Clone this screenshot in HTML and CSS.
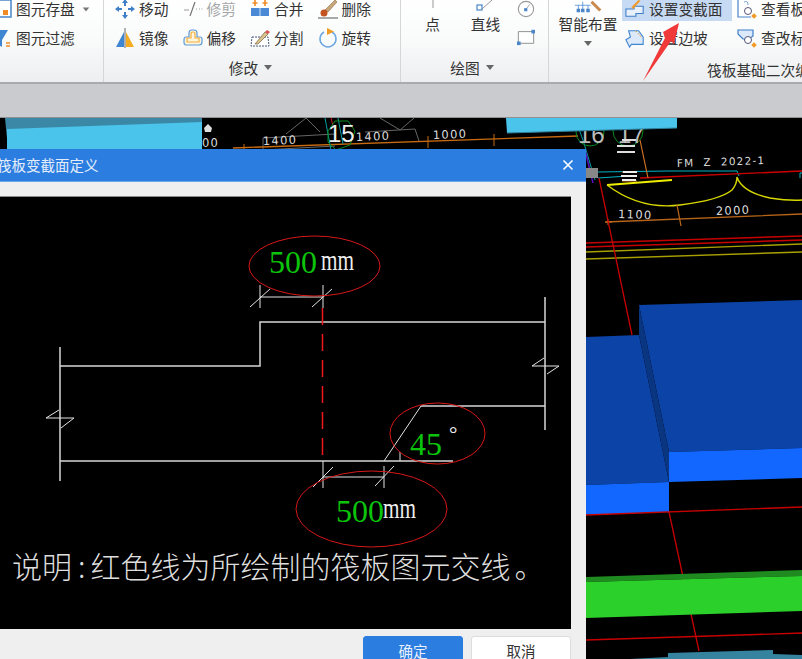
FILE: index.html
```html
<!DOCTYPE html>
<html lang="zh">
<head>
<meta charset="utf-8">
<title>筏板变截面定义</title>
<link rel="stylesheet" href="styles.css">
</head>
<body>
<div class="app">
  <header class="ribbon">
    <section class="group group-a">
      <div class="tools tools-a">
        <div class="tool"><svg class="ic ic-cut" viewBox="0 0 12 20"><rect x="-6" y="1" width="17" height="17" fill="#fff" stroke="#4a86c8" stroke-width="1.5"/><rect x="3" y="11" width="5" height="5" fill="#f08a24"/></svg><span>图元存盘</span><i class="caret caret-s"></i></div>
        <div class="tool"><svg class="ic ic-cut" viewBox="0 0 12 20"><path d="M-6 2H8L2 12V19L-1 17V12Z" fill="#3f86d2"/><path d="M6 15h4M6 18h4" stroke="#f08a24" stroke-width="1.5"/></svg><span>图元过滤</span></div>
      </div>
      <div class="label"><span>&nbsp;</span></div>
    </section>

    <section class="group group-b">
      <div class="tools tools-b">
        <div class="tool"><svg class="ic" viewBox="0 0 20 20"><g fill="#3f7fc8"><path d="M10 0l3 4h-2v3H9V4H7zM10 20l-3-4h2v-3h2v3h2zM0 10l4-3v2h3v2H4v2zM20 10l-4 3v-2h-3V9h3V7z"/></g></svg><span>移动</span></div>
        <div class="tool tool-off"><svg class="ic" viewBox="0 0 20 20"><path d="M1 11h5M13 10h1M16 10h1M18.500 10h1" stroke="#9a9a9a" stroke-width="1.200" fill="none"/><path d="M7 17L12 3" stroke="#777" stroke-width="1.200"/></svg><span>修剪</span></div>
        <div class="tool"><svg class="ic" viewBox="0 0 20 20"><path d="M1 9h18v8H1z" fill="#4a8ad4"/><path d="M10 9v8" stroke="#cfe2f7"/><path d="M5 1v6M2.500 4h5M15 1v6M12.500 4h5" stroke="#f08a24" stroke-width="1.600"/></svg><span>合并</span></div>
        <div class="tool"><svg class="ic" viewBox="0 0 20 20"><path d="M7 11L17 1l2 2L10 13z" fill="#c9a67a" stroke="#8a6a45" stroke-width=".6"/><circle cx="6" cy="14" r="3.500" fill="#c2521f"/><path d="M0 19h20" stroke="#555"/></svg><span>删除</span></div>
        <div class="tool"><svg class="ic" viewBox="0 0 20 20"><path d="M9 4v15H1z" fill="#3f86d2"/><path d="M11 4v15h8z" fill="#f4ad23"/><path d="M10 0v20" stroke="#666"/></svg><span>镜像</span></div>
        <div class="tool"><svg class="ic" viewBox="0 0 20 20"><path d="M6 9V5q0-3 3-3h2q3 0 3 3v4h3q2 0 2 2v3q0 3-3 3H3q-2 0-2-3v-2q0-3 2-3z" fill="#fff5dc" stroke="#5c9bdc" stroke-width="1.200"/><path d="M8 10V6q0-2 2-2t2 2v4h4v4H4v-4z" fill="none" stroke="#f0b040" stroke-width="1.200"/></svg><span>偏移</span></div>
        <div class="tool"><svg class="ic" viewBox="0 0 20 20"><path d="M2 9h16l1 9H1z" fill="#fff" stroke="#45577a" stroke-dasharray="2 1"/><path d="M5 16L15 4l3 2L8 16z" fill="#d9c38f" stroke="#7a6040" stroke-width=".7"/><path d="M15 4l2-2 3 2-2 2z" fill="#d9534f"/></svg><span>分割</span></div>
        <div class="tool"><svg class="ic" viewBox="0 0 20 20"><path d="M6 4a8 8 0 1 0 8 0" fill="none" stroke="#6da7e2" stroke-width="1.500"/><path d="M9 0l7 3.500L9 7z" fill="#f09a28"/></svg><span>旋转</span></div>
      </div>
      <div class="label"><span>修改</span><i class="caret"></i></div>
    </section>

    <section class="group group-c">
      <div class="tools tools-c">
        <div class="stack"><svg class="ic-top" viewBox="0 0 14 12"><path d="M7 0v8" stroke="#999"/></svg><span>点</span></div>
        <div class="stack"><svg class="ic-top" viewBox="0 0 24 12"><path d="M8 9L18 0" stroke="#999"/><rect x="3" y="5" width="5" height="5" fill="#fff" stroke="#4a86c8" stroke-width="1.200"/></svg><span>直线</span></div>
        <div class="minis">
          <svg class="ic-mini" viewBox="0 0 20 20"><circle cx="10" cy="10" r="8.500" fill="#fff" stroke="#999" stroke-width="1.200"/><rect x="8" y="9" width="3.500" height="3.500" fill="#4a86c8"/><path d="M11 9l3-4" stroke="#999"/></svg>
          <svg class="ic-mini" viewBox="0 0 20 20"><path d="M1.500 4h17v13H1.500z" fill="#fff" stroke="#888"/><rect y="15" width="4" height="4" fill="#4a86c8"/><rect x="16" y="2" width="4" height="4" fill="#4a86c8"/></svg>
        </div>
      </div>
      <div class="label"><span>绘图</span><i class="caret"></i></div>
    </section>

    <section class="group group-d">
      <div class="tools-d">
        <div class="stack stack-wide"><svg class="ic-top ic-top-d" viewBox="0 0 34 16"><path d="M2 6h18M6 6v5M11 2v9M17 6v5" stroke="#5a94d6" fill="none"/><rect x="4" y="10" width="4" height="4" fill="#4a86c8"/><rect x="9" y="10" width="4" height="4" fill="#4a86c8"/><rect x="15" y="10" width="4" height="4" fill="#4a86c8"/><path d="M21 2l10 10" stroke="#c98a4c" stroke-width="3.500"/></svg><span>智能布置</span><i class="caret caret-low"></i></div>
        <div class="col">
          <div class="tool tool-hi"><svg class="ic" viewBox="0 0 22 20"><path d="M1 10h9v-3h10v8h-8v3H1z" fill="#e8f1fb" stroke="#3f7fc8" stroke-width="1.200"/><path d="M7 8L15 0l2 1-8 9z" fill="#f09a28"/></svg><span>设置变截面</span></div>
          <div class="tool tool-slope"><svg class="ic" viewBox="0 0 22 20"><path d="M4 2h11l5 7v8H7l-2 3-4-8 5-3z" fill="#dbe9f8" stroke="#3f86d2" stroke-width="1.200"/><path d="M12 2l7 8" stroke="#f09a28" stroke-dasharray="2 1.500" fill="none"/></svg><span>设置边坡</span></div>
        </div>
        <div class="col col-last">
          <div class="tool"><svg class="ic" viewBox="0 0 20 20"><path d="M1 0v18h13" fill="#fff" stroke="#4a86c8" stroke-width="1.200"/><path d="M7 3q4-2 4 3" fill="none" stroke="#7aa7d8"/><circle cx="11" cy="12" r="3.500" fill="#fff" stroke="#557"/><rect x="15" y="15" width="4" height="4" fill="#f09a28" transform="rotate(45 17 17)"/></svg><span>查看板</span></div>
          <div class="tool"><svg class="ic" viewBox="0 0 20 20"><path d="M1 2h15v6l-4 3H6L1 6z" fill="#dbe9f8" stroke="#3f7fc8" stroke-width="1.200"/><circle cx="11" cy="12" r="3.500" fill="#fff" stroke="#557"/><rect x="15" y="15" width="4" height="4" fill="#f09a28" transform="rotate(45 17 17)"/></svg><span>查改标</span></div>
        </div>
      </div>
      <div class="label label-d"><span>筏板基础二次编辑</span></div>
    </section>
  </header>

  <div class="strip"></div>

  <main class="canvas">
    <svg class="cad" viewBox="0 118 802 541" width="802" height="541">
      <rect x="0" y="118" width="802" height="541" fill="#000"/>
      <path d="M5 118H202V149H8z" fill="#3a88a6"/>
      <path d="M7 129L202 122V149H7z" fill="#4ac4ea"/>
      <g stroke="#666" fill="none">
        <path d="M263 138l72-4M263 150l72-4M263 138v12M286 134l20-16 14 14M365 132l50-3 4 12M380 118l20 12 14-12"/>
      </g>
      <path d="M233 148L578 136" stroke="#c86a10" stroke-width="1.300"/>
      <path d="M244 144v5M428 136v12M494 134v12" stroke="#c86a10"/>
      <g fill="none" stroke="#00a0a0">
        <path d="M325 118l6 32M338 118l5 26"/>
        <path d="M575 118l8 22 12 40"/>
      </g>
      <path d="M331 118l2 8" stroke="#d01010"/>
      <path d="M328 131l7-10h13l7 10-5 14-14 5-8-8z" fill="none" stroke="#0a8a1e"/>
      <circle cx="590" cy="132" r="14" fill="none" stroke="#0a8a1e"/>
      <circle cx="628" cy="131" r="15" fill="none" stroke="#0a8a1e"/>
      <g class="cad-num">
        <text x="263" y="145" transform="rotate(-2 263 145)">1400</text>
        <text x="356" y="141" transform="rotate(-2 356 141)">1400</text>
        <text x="433" y="139" transform="rotate(-2 433 139)">1000</text>
        <text x="202" y="147">00</text>
        <text x="618" y="218" transform="rotate(2 618 218)">1100</text>
        <text x="716" y="215" transform="rotate(-2 716 215)">2000</text>
      </g>
      <path d="M208 124l-4 4 1 4h6l1-4z" fill="#ddd"/>
      <text class="cad-big" x="328" y="142">15</text>
      <text class="cad-dim" x="578" y="143">16</text>
      <text class="cad-dim" x="618" y="143">17</text>
      <text class="cad-note" x="677" y="167" transform="rotate(-2 677 167)">FM  Z  2022-1</text>
      <path d="M506 118H677V128L507 133z" fill="#4ac4ea"/>
      <path d="M507 133L677 128" stroke="#2f7f99"/>
      <path d="M622 140h14M617 146h18M617 152h18" stroke="#ddd" stroke-width="2"/>
      <path d="M585 150l8 33" stroke="#5a10c0" stroke-width="1.500"/>
      <path d="M586 168h12v10h-12z" fill="#888"/>
      <path d="M598 172l70-1 3-0h66l2 5M598 178l30-2" stroke="#00b4c8" fill="none"/>
      <path d="M640 178L802 171" stroke="#c00" stroke-width="1.300"/>
      <path d="M640 140l8 38M622 172h15M622 176h15M622 181h15" stroke="#d07020" stroke-width="1.200" fill="none"/>
      <path d="M623 172h14M621 176h16M622 180h14" stroke="#eee" stroke-width="2"/>
      <path d="M800 178v-5h2" stroke="#00b4c8" fill="none"/>
      <path d="M607 185L672 180" stroke="#eeee00" stroke-width="2.200"/>
      <path d="M607 185Q640 210 680 205T732 190Q737 184 737 177Q742 192 770 198Q790 201 802 200" stroke="#d8d800" stroke-width="1.400" fill="none"/>
      <path d="M605 222L802 214M677 205l4 21" stroke="#b8651a" stroke-width="1.300"/>
      <path d="M606 222h6M608 219v6" stroke="#d07020"/>
      <path d="M586 243L802 236M586 247L802 240" stroke="#c80000" stroke-width="1.400"/>
      <path d="M586 252L802 244M586 259L802 252" stroke="#a8a000" stroke-width="1.400"/>
      <path d="M599 178L632 335M669 512L699 651" stroke="#c80000" stroke-width="1.300"/>
      <path d="M586 337L639 335L669 482L586 485z" fill="#0c43a7"/>
      <path d="M639 305L802 300V448L669 452z" fill="#0c43a7"/>
      <path d="M639 305L669 452V482L639 335z" fill="#0a3580"/>
      <path d="M586 485L669 482V512L586 515z" fill="#1167ff"/>
      <path d="M669 452L802 448V478L669 482z" fill="#1167ff"/>
      <path d="M586 515L802 507M586 640L802 633" stroke="#c80000" stroke-width="1.300"/>
      <path d="M586 577L802 570V576L586 582z" fill="#1f8a1f"/>
      <path d="M586 582L802 576V611L586 618z" fill="#2bd02b"/>
      <path d="M630 659L668 657V653L773 650V654L802 655V659z" fill="#35839f"/>
    </svg>

    <section class="dialog">
      <div class="dialog-title">
        <span class="dialog-name">筏板变截面定义</span>
        <svg class="close" viewBox="0 0 12 12"><path d="M1.500 1.500l9 9M10.500 1.500l-9 9" stroke="#fff" stroke-width="1.600"/></svg>
      </div>
      <div class="dialog-body">
        <svg class="drawing" viewBox="0 196 571 433" width="571" height="433">
          <rect x="0" y="196" width="571" height="433" fill="#000"/>
          <path class="edge" d="M0 196.500H571"/>
          <g class="thick">
            <path d="M60 347V481M60 366H260V322H545M545 297V430M60 461H453M421 406H545"/>
          </g>
          <g class="thin">
            <path d="M59 410L46 418H74L61 428M544 358L532 366H559L547 374"/>
            <path d="M260 297H323M260 285V308M250 307L270 289M323 285V308M312 307L332 289"/>
            <path d="M421 406L384 461M400 452V461"/>
            <path d="M323 477H384M323 461V488M384 466V488M313 487L333 467M375 486L394 466"/>
          </g>
          <path class="dash" d="M322.500 308V461"/>
          <g class="ring">
            <ellipse cx="314.500" cy="266" rx="65.500" ry="30"/>
            <ellipse cx="437.500" cy="433.500" rx="47.500" ry="30.500"/>
            <ellipse cx="371.500" cy="509" rx="75.500" ry="38"/>
          </g>
          <text class="val" x="269" y="273">500</text>
          <text class="mm" x="321" y="270" textLength="33" lengthAdjust="spacingAndGlyphs">mm</text>
          <text class="val" x="410" y="455">45</text>
          <text class="deg" x="449" y="441">°</text>
          <text class="val" x="336" y="522">500</text>
          <text class="mm" x="383" y="518" textLength="33" lengthAdjust="spacingAndGlyphs">mm</text>
          <text class="note" x="12" y="578">说明<tspan dx="6">:</tspan><tspan dx="5">红色线为所绘制的筏板图元交线</tspan><tspan dx="4">。</tspan></text>
        </svg>
        <div class="actions">
          <button class="btn btn-ok" type="button">确定</button>
          <button class="btn" type="button">取消</button>
        </div>
      </div>
    </section>
  </main>

  <svg class="mark" viewBox="0 0 50 70" width="50" height="70"><path d="M3 61L25 18L23 12L39 3L34 24L31 21z" fill="#f03a3a"/></svg>
</div>
</body>
</html>
```

FILE: styles.css
```css
* { box-sizing: border-box; }
html, body { margin: 0; padding: 0; background: #000; }
body { font-family: "Noto Sans CJK SC", "Liberation Sans", sans-serif; }
.app { position: relative; width: 802px; height: 659px; overflow: hidden; display: flex; flex-direction: column; }

.ribbon { height: 84px; flex: none; display: flex; background: linear-gradient(#ffffff, #f9fafa 50%, #eceef0); border-bottom: 2px solid #a8aaad; color: #333; font-size: 14.7px; line-height: 16px; overflow: hidden; }
.group { flex: none; display: flex; flex-direction: column; overflow: hidden; }
.group-a { width: 104px; border-right: 1px solid #d4d6d8; }
.group-b { width: 297px; border-right: 1px solid #d4d6d8; padding-left: 11px; }
.group-c { width: 148px; border-right: 1px solid #d4d6d8; padding-left: 5px; }
.group-d { flex: 1; min-width: 0; padding-left: 9px; }

.tools { height: 52px; flex: none; }
.tools-a { display: grid; grid-auto-rows: 18px; row-gap: 11px; align-items: center; }
.tools-b { display: grid; grid-template-columns: repeat(4, 67.5px); grid-auto-rows: 18px; row-gap: 11px; align-items: center; }
.tools-c { display: grid; grid-template-columns: 53px 53px 40px; }
.tools-d { display: flex; height: 52px; flex: none; }

.tool { display: flex; align-items: center; gap: 4px; height: 18px; flex: none; white-space: nowrap; }
.tool-off { color: #a4a6a8; }
.ic { width: 20px; height: 20px; flex: none; display: block; }
.ic-cut { width: 12px; }

.stack { display: flex; flex-direction: column; align-items: center; height: 52px; }
.ic-top { width: 24px; height: 12px; margin-bottom: 2px; display: block; }
.stack span { line-height: 20px; }
.minis { display: flex; flex-direction: column; gap: 10px; padding-left: 5px; }
.ic-mini { width: 18px; height: 18px; display: block; }
.stack-wide { width: 60px; flex: none; }
.ic-top-d { width: 30px; height: 14px; margin: 0; }
.caret-low { margin: 7px 0 0; }

.col { width: 119px; padding-left: 4px; flex: none; display: flex; flex-direction: column; gap: 11px; }
.col-last { width: 70px; padding-left: 0; }
.tool-hi { background: #c7daf3; width: 110px; height: 21px; padding: 0 0 3px 3px; }
.tool-slope { padding-left: 3px; margin-top: -3px; }

.label { height: 31px; flex: none; display: flex; align-items: center; justify-content: center; gap: 6px; white-space: nowrap; }
.group-b .label { padding-right: 14px; }
.group-c .label { padding-right: 10px; }
.label-d { justify-content: flex-start; padding-left: 149px; padding-top: 4px; }
.caret { display: block; width: 0; height: 0; border-left: 4.500px solid transparent; border-right: 4.500px solid transparent; border-top: 5px solid #666; }
.caret-s { border-top-color: #777; margin-left: 3px; transform: scale(.8); }

.strip { height: 34px; flex: none; background: #c9cbce; border-bottom: 1px solid #8f9194; }

.canvas { position: relative; flex: 1; background: #000; overflow: hidden; }
.cad { display: block; }
.cad-num { font-family: "DejaVu Sans", sans-serif; font-size: 11.500px; letter-spacing: 1.300px; fill: #ddd; }
.cad-big { font-family: "Liberation Sans", sans-serif; font-size: 24px; fill: #eee; }
.cad-dim { font-family: "Liberation Sans", sans-serif; font-size: 24px; fill: #bbb; }
.cad-note { font-family: "DejaVu Sans", sans-serif; font-size: 10.500px; letter-spacing: 1.200px; fill: #ddd; white-space: pre; }

.dialog { position: absolute; left: 0; top: 31px; width: 586px; height: 510px; background: #efefef; display: flex; flex-direction: column; }
.dialog-title { height: 33px; flex: none; background: #2c7de0; border-bottom: 1px solid #6aa6ee; display: flex; align-items: center; justify-content: space-between; padding-right: 12px; }
.dialog-name { margin-left: -3px; color: #e4eefb; font-size: 14.500px; line-height: 20px; }
.close { width: 12px; height: 12px; display: block; }
.dialog-body { flex: 1; padding-top: 14px; }
.drawing { display: block; }
.edge { fill: none; stroke: #8a8a8a; stroke-width: 1; }

.thick { fill: none; stroke: #d6d6d6; stroke-width: 1.500; }
.thin { fill: none; stroke: #e4e4e4; stroke-width: 1; }
.dash { fill: none; stroke: #f01818; stroke-width: 1.500; stroke-dasharray: 17 9; }
.ring { fill: none; stroke: #d81818; stroke-width: 1; }
.val { font-family: "Liberation Serif", serif; font-size: 32px; fill: #0bc40b; }
.mm { font-family: "Liberation Serif", serif; font-size: 29px; fill: #eee; }
.deg { font-family: "Liberation Serif", serif; font-size: 21px; fill: #eee; }
.note { font-family: "Noto Sans CJK SC", "Liberation Serif", serif; font-size: 30px; font-weight: 300; fill: #dedede; }

.actions { display: flex; justify-content: flex-end; gap: 8px; padding: 7px 15px 0 0; }
.btn { width: 100px; height: 34px; padding: 0 0 5px; border: 1px solid #dcdcdc; border-radius: 3px; background: #fff; color: #333; font: 14.500px/20px "Noto Sans CJK SC", sans-serif; }
.btn-ok { background: #2c7de0; border-color: #2c7de0; color: #e8f1fc; }

.mark { position: absolute; left: 640px; top: 20px; }
```
